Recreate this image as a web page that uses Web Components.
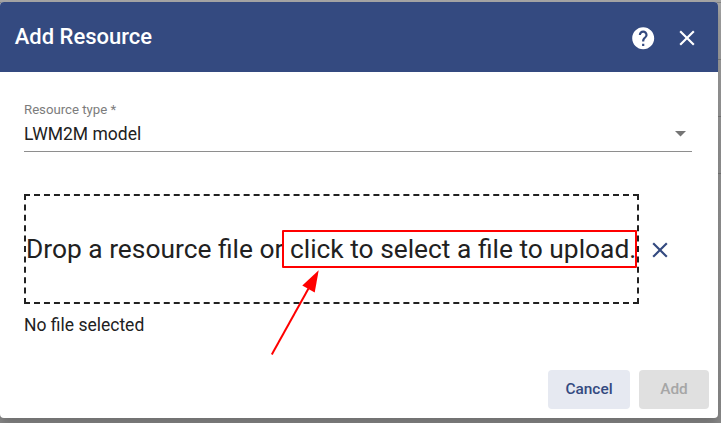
<!DOCTYPE html>
<html lang="en">
<head>
<meta charset="utf-8">
<title>Add Resource</title>
<style>
html,body{margin:0;height:100%;overflow:hidden}
body{font-family:Roboto,"Liberation Sans",sans-serif;color:#212121;background:#919191}
</style>
</head>
<body>
<resource-dialog></resource-dialog>
<script>
const define=(name,markup)=>{
  const t=document.createElement('template');
  t.innerHTML=markup;
  customElements.define(name,class extends HTMLElement{
    constructor(){super();this.attachShadow({mode:'open'}).append(t.content.cloneNode(true));}
  });
};

define('close-icon',`<style>:host{display:block;width:26px;height:26px}svg{display:block}</style>
<svg width="26" height="26" viewBox="0 0 24 24" fill="currentColor"><path d="M19 6.41 17.59 5 12 10.59 6.41 5 5 6.41 10.59 12 5 17.59 6.41 19 12 13.41 17.59 19 19 17.59 13.41 12z"/></svg>`);

define('help-icon',`<style>:host{display:block;width:26.4px;height:26.4px}svg{display:block}</style>
<svg width="26.4" height="26.4" viewBox="0 0 24 24" fill="currentColor"><path d="M12 2C6.48 2 2 6.48 2 12s4.48 10 10 10 10-4.480 10-10S17.520 2 12 2zm1 17h-2v-2h2v2zm2.070-7.750-.9.920C13.450 12.900 13 13.500 13 15h-2v-.5c0-1.100.45-2.100 1.170-2.830l1.240-1.260c.37-.36.59-.86.59-1.410 0-1.100-.9-2-2-2s-2 .9-2 2H8c0-2.210 1.790-4 4-4s4 1.790 4 4c0 .88-.36 1.680-.93 2.250z"/></svg>`);

define('dialog-header',`<style>
:host{display:flex;align-items:center;height:70px;box-sizing:border-box;padding:0 18px 0 14.700px;background:#344a80;color:#fff}
h2{margin:0 auto 0 0;font-weight:500;font-size:22px;line-height:30px;padding-bottom:1px}
help-icon{margin:2px 18px 0 0}close-icon{margin-top:2px}
</style><h2><slot></slot></h2><help-icon></help-icon><close-icon></close-icon>`);

define('select-field',`<style>
:host{display:block;height:50px;border-bottom:1px solid #8e8e8e}
.label{font-size:13.2px;line-height:18px;color:#7c7c7c}
.row{display:flex;align-items:center;justify-content:space-between;padding:2px 6px 0 0;font-size:17.5px;line-height:26px}
svg{display:block}
</style><div class="label"><slot name="label"></slot></div>
<div class="row"><slot></slot><svg width="11" height="6" viewBox="0 0 11 6"><path d="M0 0h11L5.500 5.500z" fill="#757575"/></svg></div>`);

define('file-drop',`<style>
:host{display:flex;align-items:center}
.zone{position:relative;box-sizing:border-box;width:615px;height:110px;border:2px dashed #212121;display:flex;align-items:center;white-space:nowrap;font-size:26.35px;line-height:34px}
.mark{position:absolute;left:256px;top:34px;width:351px;height:34px;border:2px solid #f00;border-radius:1px}
svg{position:absolute;left:243.500px;top:72px;overflow:visible}
close-icon{margin:1px 0 0 8.400px;color:#344a80}
</style><div class="zone"><span><slot></slot></span><div class="mark"></div>
<svg width="52" height="90" viewBox="270 268 52 90"><path d="M271.800 354.500 308.500 288.500" stroke="#f00" stroke-width="2"/><path d="M318.700 270.300 302.300 285.500 314.700 292.500z" fill="#f00"/></svg></div><close-icon></close-icon>`);

define('dialog-button',`<style>
:host{display:flex;box-sizing:border-box;width:82px;height:39px;align-items:center;justify-content:center;border-radius:4px;background:#e6e9f1;color:#344a80;font-weight:500;font-size:15.4px;padding-bottom:2px}
:host([disabled]){width:70px;background:#e0e0e0;color:#a6a6a6}
</style><slot></slot>`);

define('resource-dialog',`<style>
:host{display:block;height:423px;box-sizing:border-box;padding-top:2px;
background:linear-gradient(#0003,#0003) 0 2px/100% 1px no-repeat,linear-gradient(#0003,#0003) 0 59px/100% 1px no-repeat,linear-gradient(#0003,#0003) 0 116px/100% 1px no-repeat,linear-gradient(#0003,#0003) 0 173px/100% 1px no-repeat,linear-gradient(#a5a5a5,#939393 35%,#909090 75%,#8c8c8c)}
.panel{width:718px;height:416px;background:#fff;border-radius:4px;overflow:hidden;box-shadow:0 8px 12px #0003}
main{padding:29px 26px 0 24px}
file-drop{margin-top:42px}
.status{font-size:17.5px;line-height:24px;margin-top:9px}
footer{display:flex;justify-content:flex-end;gap:9px;padding:33px 9px 0 0}
</style>
<div class="panel"><dialog-header>Add Resource</dialog-header>
<main><select-field><span slot="label">Resource type *</span>LWM2M model</select-field>
<file-drop>Drop a resource file or click to select a file to upload.</file-drop>
<div class="status">No file selected</div></main>
<footer><dialog-button>Cancel</dialog-button><dialog-button disabled>Add</dialog-button></footer></div>`);
</script>
</body>
</html>
